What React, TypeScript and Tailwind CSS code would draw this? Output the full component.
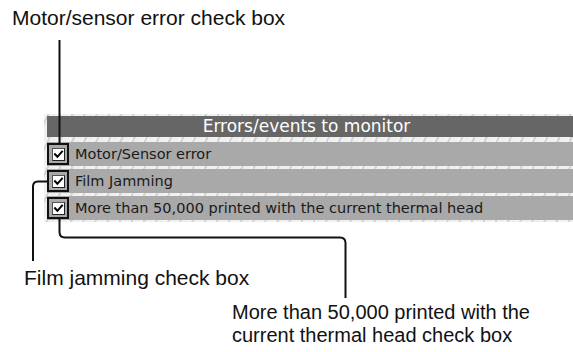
import { Fragment } from 'react'

const rows = [
  'Motor/Sensor error',
  'Film Jamming',
  'More than 50,000 printed with the current thermal head',
]

function CheckBox() {
  return (
    <div className="flex h-[22px] w-[22px] shrink-0 items-center justify-center border-2 border-[#111]">
      <div className="flex h-[13px] w-[13px] items-center justify-center border border-t-[#555] border-l-[#555] border-r-[#222] border-b-[#222] bg-white">
        <svg width="11" height="11" viewBox="0 0 11 11">
          <path d="M2 5.2 L4.4 7.8 L9 2.6" fill="none" stroke="#000" strokeWidth="2" strokeLinecap="square" />
        </svg>
      </div>
    </div>
  )
}

export default function App() {
  const labelCls = "text-[#111] font-['Liberation_Sans',Arial,sans-serif]"

  return (
    <div className="relative h-[352px] w-[573px] overflow-hidden bg-white">
      <p className={`${labelCls} ml-[12px] pt-[6px] text-[21px] leading-[24px]`}>Motor/sensor error check box</p>

      <div className="ml-[44px] mt-[84px] w-[532px] bg-[#e0e0e0] pb-[2px] pl-[3px] pr-[2px] pt-[2px] font-['DejaVu_Sans',sans-serif]"
        style={{ backgroundImage: 'repeating-linear-gradient(115deg, rgba(255,255,255,0.6) 0 3px, rgba(190,190,190,0.35) 3px 5px, rgba(255,255,255,0.5) 5px 11px)' }}>
        <div className="flex h-[21px] items-center justify-center bg-[#666666] pr-[8px] text-[17px] leading-none text-white">
          Errors/events to monitor
        </div>
        <div className="mt-[5px] flex flex-col gap-[3px]">
          {rows.map((r) => (
            <Fragment key={r}>
              <div className="flex h-[24px] items-center bg-[#a9a9a9]">
                <CheckBox />
                <span className="ml-[6px] text-[14.5px] leading-none text-[#1a1a1a]">{r}</span>
              </div>
            </Fragment>
          ))}
        </div>
      </div>

      <p className={`${labelCls} ml-[24px] mt-[44px] text-[21px] leading-[24px]`}>Film jamming check box</p>
      <p className={`${labelCls} ml-[232px] mt-[11px] text-[20px] leading-[23px]`}>
        More than 50,000 printed with the
        <br />
        current thermal head check box
      </p>

      {/* leader lines */}
      <svg className="pointer-events-none absolute inset-0" width="573" height="352" viewBox="0 0 573 352">
        <g fill="none" stroke="#111" strokeWidth="2">
          <path d="M59.5 40 V145" />
          <path d="M47 181.5 H38 Q33 181.5 33 186.5 V261" />
          <path d="M59.5 218 V232 Q59.5 237.5 65 237.5 H340 Q345.5 237.5 345.5 243 V298" />
        </g>
      </svg>
    </div>
  )
}
